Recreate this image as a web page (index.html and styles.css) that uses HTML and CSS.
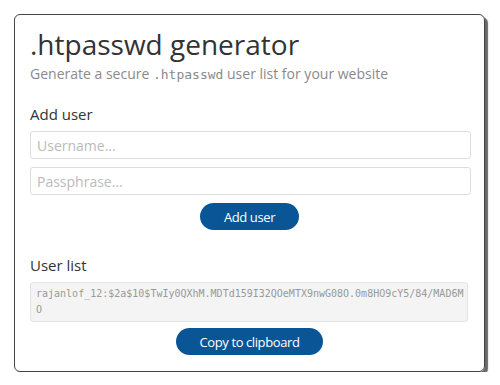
FILE: index.html
```html
<!DOCTYPE html>
<html lang="en">
<head>
    <meta charset="UTF-8">
    <meta name="viewport" content="width=device-width, initial-scale=1.0">
    <title>.htpasswd generator</title>
    <link rel="stylesheet" href="styles.css">
</head>
<body>

    <!-- Karta generatora -->
    <div class="card">
        <h1>.htpasswd generator</h1>
        <p class="lead">Generate a secure <code>.htpasswd</code> user list for your website</p>

        <h2>Add user</h2>
        <input type="text" class="field" placeholder="Username...">
        <input type="password" class="field" placeholder="Passphrase...">
        <div class="actions">
            <button class="btn">Add user</button>
        </div>

        <h2 class="list-title">User list</h2>
        <div class="output">rajanlof_12:$2a$10$TwIy0QXhM.MDTd159I32QOeMTX9nwG08O.0m8HO9cY5/84/MAD6M
O</div>
        <div class="actions">
            <button class="btn">Copy to clipboard</button>
        </div>
    </div>

</body>
</html>
```

FILE: styles.css
```css
body {
    margin: 0;
    font-family: 'Open Sans', sans-serif;
    background-color: #fff;
    color: #333;
}

.card {
    width: 471px;
    box-sizing: border-box;
    margin: 14px 0 0 14px;
    padding: 12px 15px 16px 15px;
    border: 1px solid #444;
    border-radius: 6px;
    box-shadow: 3px 3px 1px #6a6a6a;
}

h1 {
    font-size: 28px;
    font-weight: 400;
    line-height: 34px;
    margin: 0;
    color: #333;
}

.lead {
    font-size: 14px;
    line-height: 20px;
    color: #8a8a8a;
    margin: 3px 0 0 0;
}

.lead code {
    font-family: 'DejaVu Sans Mono', monospace;
    font-size: 13px;
    color: #8a8a8a;
}

h2 {
    font-size: 15px;
    font-weight: 400;
    line-height: 20px;
    margin: 19px 0 7px 0;
    color: #333;
}

.field {
    display: block;
    width: 441px;
    box-sizing: border-box;
    height: 28px;
    margin: 0 0 8px 0;
    padding: 0 6px;
    border: 1px solid #ddd;
    border-radius: 3px;
    font-family: 'Open Sans', sans-serif;
    font-size: 14px;
    color: #333;
}

.field::placeholder {
    color: #bbb;
}

.actions {
    text-align: center;
    margin-top: 2px;
}

.btn {
    font-family: 'Open Sans', sans-serif;
    font-size: 13px;
    letter-spacing: -0.4px;
    color: #fff;
    background-color: #0a5596;
    border: none;
    border-radius: 14px;
    height: 27px;
    padding: 0 24px;
    cursor: pointer;
}

.list-title {
    margin-top: 25px;
}

.output {
    width: 438px;
    box-sizing: border-box;
    padding: 3px 5px;
    background-color: #f4f4f4;
    border: 1px solid #e3e3e3;
    border-radius: 3px;
    font-family: 'DejaVu Sans Mono', monospace;
    font-size: 10px;
    line-height: 16px;
    color: #999;
    white-space: pre-wrap;
    margin-bottom: 6px;
}
```
